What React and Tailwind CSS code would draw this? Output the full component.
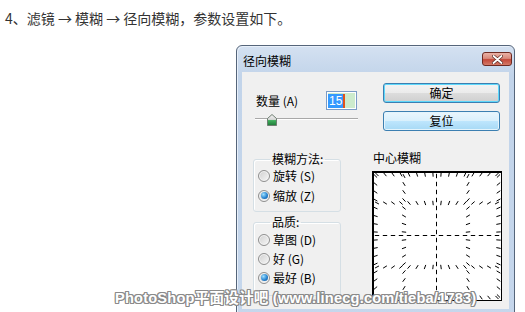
import React from "react";

const CJK = "font-['Noto_Sans_CJK_SC','Noto_Sans',sans-serif]";

function Radio({ checked, label }) {
  return (
    <div className="flex items-center h-[19px]">
      <span className="w-[12px] h-[12px] rounded-full border border-[#8f8f8f] bg-[linear-gradient(135deg,#cfcfcf,#f7f7f7)] flex items-center justify-center shadow-[inset_0_0_0_1px_#f4f4f4]">
        {checked && (
          <span className="w-[7px] h-[7px] rounded-full bg-[radial-gradient(circle_at_35%_35%,#9fe0ff,#2a86d2_55%,#0f4f8f)]" />
        )}
      </span>
      <span className="ml-[3px] text-[12px] leading-[14px] text-black">{label}</span>
    </div>
  );
}

function Preview() {
  const lines = [2.5, 31, 63.5, 95, 125.5];
  const C = 63.5;
  const pts = new Map();
  for (const f of lines) {
    for (let t = 4; t <= 124; t += 8) {
      pts.set(`${f},${t}`, [f, t]);
      pts.set(`${t},${f}`, [t, f]);
    }
  }
  const segs = [];
  for (const [x, y] of pts.values()) {
    const dx = C - x;
    const dy = C - y;
    const d = Math.hypot(dx, dy);
    if (d < 2) continue;
    const ux = dx / d;
    const uy = dy / d;
    const h = 2.2;
    segs.push([x - ux * h, y - uy * h, x + ux * h, y + uy * h]);
  }
  return (
    <div className="w-[130px] h-[130px] border border-black bg-white shadow-[inset_1px_1px_0_#000]">
      <svg width="128" height="128" viewBox="0 0 128 128">
        {segs.map((s, i) => (
          <line key={i} x1={s[0]} y1={s[1]} x2={s[2]} y2={s[3]} stroke="#000" strokeWidth="1" />
        ))}
      </svg>
    </div>
  );
}

export default function App() {
  const outline =
    "[text-shadow:1px_0_0_#8a8a8a,-1px_0_0_#8a8a8a,0_1px_0_#8a8a8a,0_-1px_0_#8a8a8a,1px_1px_0_#8a8a8a,-1px_-1px_0_#8a8a8a,1px_-1px_0_#8a8a8a,-1px_1px_0_#8a8a8a]";
  return (
    <div className={`relative w-[525px] h-[312px] overflow-hidden bg-white ${CJK}`}>
      <p className="pl-[5px] pt-[8px] text-[14px] leading-[20px] text-[#333]">
        4、滤镜 → 模糊 → 径向模糊，参数设置如下。
      </p>

      <div className="ml-[236px] mt-[17px] w-[279px] h-[300px] rounded-t-[6px] border border-[#55657a] bg-[linear-gradient(180deg,#d4e1f1,#c2d4ea_30px,#c6d7ec)] shadow-[inset_1px_1px_0_#e8f0fa] flex flex-col">
        <div className="h-[26px] flex items-start justify-between pl-[6px] pr-[2px]">
          <span className="pt-[8px] text-[12px] leading-[14px] text-black">径向模糊</span>
          <div className="mt-[6px] w-[30px] h-[14px] rounded-[3px] border border-[#6e2a22] bg-[linear-gradient(180deg,#eab1a6,#d88a7c_45%,#c4493a_55%,#d47a68)] flex items-center justify-center">
            <svg width="11" height="9" viewBox="0 0 11 9">
              <path d="M1.5 1 L9.5 8 M9.5 1 L1.5 8" stroke="#5a2a24" strokeWidth="3.2" strokeLinecap="round" />
              <path d="M1.5 1 L9.5 8 M9.5 1 L1.5 8" stroke="#ffffff" strokeWidth="1.8" strokeLinecap="round" />
            </svg>
          </div>
        </div>

        <div className="mx-[5px] h-[237px] bg-[#f0f0f0] flex pl-[11px]">
          {/* left column */}
          <div className="w-[105px] flex flex-col">
            <div className="mt-[19px] h-[19px] flex items-center justify-between">
              <span className="pl-[3px] text-[12px] leading-[14px] text-black">数量 (A)</span>
              <div className="mr-[1px] w-[31px] h-[19px] border border-[#7b9cc6] bg-white p-[1px] flex">
                <div className="flex-1 bg-[#cdebcd] flex items-center">
                  <span className="bg-[#3399ff] text-white text-[12px] leading-[14px] px-[1px] font-['Liberation_Sans',sans-serif]">15</span>
                  <span className="w-[2px] h-[14px] bg-[#e0541c]" />
                </div>
              </div>
            </div>
            <div className="relative mt-[4px] h-[12px]">
              <div className="absolute left-[2px] right-0 top-[4px] h-[2px] bg-[#a8a8a8] border-b border-white" />
              <svg className="absolute left-[14px] top-0" width="10" height="12" viewBox="0 0 10 12">
                <defs>
                  <linearGradient id="th" x1="0" y1="0" x2="0" y2="1">
                    <stop offset="0" stopColor="#f4f4f4" />
                    <stop offset="0.45" stopColor="#d8d8d8" />
                    <stop offset="0.55" stopColor="#3fae5c" />
                    <stop offset="1" stopColor="#1f7a38" />
                  </linearGradient>
                </defs>
                <path d="M5 0.5 L9.5 4.5 L9.5 11.5 L0.5 11.5 L0.5 4.5 Z" fill="url(#th)" stroke="#6f7f72" strokeWidth="1" />
              </svg>
            </div>

            <fieldset className="mt-[27px] w-[88px] border border-[#d5dfe5] rounded-[3px] shadow-[inset_1px_1px_0_#ffffff] pl-[4px] pb-[6px]">
              <legend className="ml-[12px] px-[2px] text-[12px] leading-[12px] text-black">模糊方法:</legend>
              <div className="pt-[1px] flex flex-col gap-[1px]">
                <Radio label="旋转 (S)" />
                <Radio checked label="缩放 (Z)" />
              </div>
            </fieldset>

            <fieldset className="mt-[4px] w-[88px] border border-[#d5dfe5] rounded-[3px] shadow-[inset_1px_1px_0_#ffffff] pl-[4px] pb-[8px]">
              <legend className="ml-[12px] px-[2px] text-[12px] leading-[12px] text-black">品质:</legend>
              <div className="pt-[2px] flex flex-col">
                <Radio label="草图 (D)" />
                <Radio label="好 (G)" />
                <Radio checked label="最好 (B)" />
              </div>
            </fieldset>
          </div>

          {/* right column */}
          <div className="ml-[14px] w-[130px] flex flex-col">
            <div className="ml-[11px] mt-[11px] w-[117px] h-[20px] rounded-[3px] border border-[#3c7fb1] shadow-[inset_0_0_0_1px_#5ed8fb] bg-[linear-gradient(180deg,#f3f3f3,#ebebeb_50%,#dddddd_50%,#cfcfcf)] flex items-center justify-center text-[12px] leading-[14px] text-black">
              确定
            </div>
            <div className="ml-[11px] mt-[8px] w-[117px] h-[20px] rounded-[3px] border border-[#3c7fb1] shadow-[inset_0_0_0_1px_#e4f4fc] bg-[linear-gradient(180deg,#eaf6fd,#d9f0fc_50%,#bee6fd_50%,#a7d9f5)] flex items-center justify-center text-[12px] leading-[14px] text-black">
              复位
            </div>
            <span className="ml-[1px] mt-[20px] text-[12px] leading-[14px] text-black">中心模糊</span>
            <div className="mt-[6px]">
              <Preview />
            </div>
          </div>
        </div>
      </div>

      <div
        className={`absolute left-[115px] top-[290px] whitespace-nowrap text-[14.6px] leading-[16px] tracking-[0.2px] font-bold text-white font-['Liberation_Sans','Noto_Sans_CJK_SC',sans-serif] ${outline}`}
      >
        PhotoShop平面设计吧 (www.linecg.com/tieba/1783)
      </div>
    </div>
  );
}
